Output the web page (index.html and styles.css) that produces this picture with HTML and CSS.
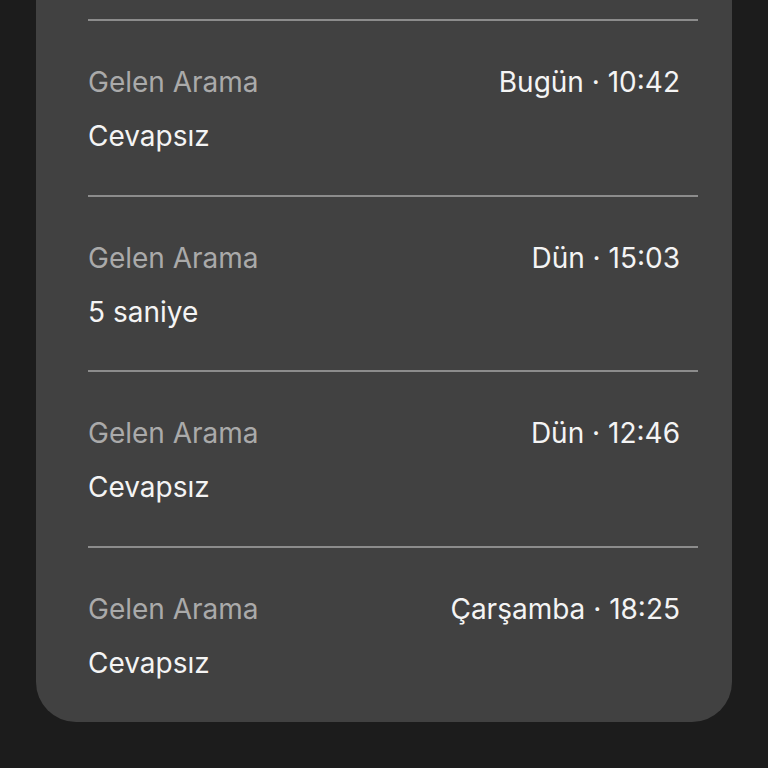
FILE: index.html
```html
<!DOCTYPE html>
<html lang="tr">
<head>
<meta charset="utf-8">
<link rel="stylesheet" href="styles.css">
</head>
<body>
<div class="card">
  <div class="spacer"></div>
  <div class="list">
    <div class="row">
      <div class="line"><span class="kind">Gelen Arama</span><span class="when">Bugün · 10:42</span></div>
      <div class="status">Cevapsız</div>
    </div>
    <div class="row">
      <div class="line"><span class="kind">Gelen Arama</span><span class="when">Dün · 15:03</span></div>
      <div class="status">5 saniye</div>
    </div>
    <div class="row">
      <div class="line"><span class="kind">Gelen Arama</span><span class="when">Dün · 12:46</span></div>
      <div class="status">Cevapsız</div>
    </div>
    <div class="row">
      <div class="line"><span class="kind">Gelen Arama</span><span class="when">Çarşamba · 18:25</span></div>
      <div class="status">Cevapsız</div>
    </div>
  </div>
</div>
</body>
</html>
```
FILE: styles.css
```css
html, body {
  margin: 0;
  padding: 0;
  background: #1c1c1c;
  height: 768px;
  overflow: hidden;
}
body {
  font-family: Inter, "Liberation Sans", sans-serif;
  font-size: 28px;
}
.card {
  margin: 0 36px;
  background: #414141;
  border-radius: 0 0 40px 40px;
}
.spacer {
  height: 19px;
}
.list {
  padding: 0 34px 0 52px;
}
.row {
  border-top: 2px solid #8c8c8c;
  padding: 35px 18px 0 0;
  height: 138.67px;
}
.line {
  display: flex;
  justify-content: space-between;
  line-height: 52px;
}
.kind {
  color: #aaaaaa;
}
.when {
  color: #f4f4f4;
}
.status {
  color: #f4f4f4;
  line-height: 52px;
  margin-top: 2px;
}
```
